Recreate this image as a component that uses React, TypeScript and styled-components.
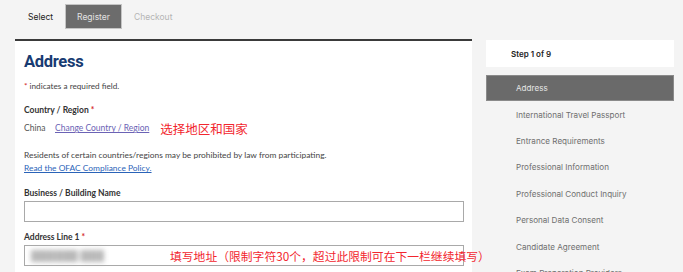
import { createGlobalStyle, styled } from "styled-components";

const GlobalStyle = createGlobalStyle`
  html, body {
    margin: 0;
    padding: 0;
    background: #f4f4f4;
    height: 272px;
    overflow: hidden;
  }
`;

const Page = styled.div`
  width: 683px;
  height: 272px;
  overflow: hidden;
  background: #f4f4f4;
  font-family: Lato, "Noto Sans", sans-serif;
`;

const Tabs = styled.div`
  display: flex;
  align-items: stretch;
  height: 25px;
  padding: 4px 0 0 16px;
  font-family: Inter, Roboto, sans-serif;
  font-size: 8.5px;
`;

const Tab = styled.div<{ $state: "done" | "active" | "todo" }>`
  display: flex;
  align-items: center;
  padding: 0 11px;
  color: ${(p) =>
    p.$state === "active" ? "#e2e2e2" : p.$state === "done" ? "#222" : "#b5b5b5"};
  background: ${(p) => (p.$state === "active" ? "#6c6c6c" : "transparent")};
  border: 1px solid ${(p) => (p.$state === "active" ? "#c4c4c4" : "transparent")};
  box-sizing: border-box;
`;

const Body = styled.div`
  display: flex;
  gap: 14px;
  margin-top: 10px;
  padding-left: 15px;
`;

const Panel = styled.div`
  width: 457px;
  background: #fff;
  border-top: 2px solid #3a3a3a;
  padding: 11px 9px 0 9px;
  box-sizing: border-box;
  height: 240px;
`;

const Heading = styled.h1`
  margin: 0 0 9px 0;
  font-family: "Liberation Sans Narrow", Roboto, sans-serif;
  font-weight: 700;
  font-size: 16.5px;
  letter-spacing: -0.3px;
  color: #173b72;
  line-height: 20px;
`;

const Small = styled.div`
  font-size: 8.2px;
  color: #444;
  line-height: 10px;
`;

const Star = styled.span`
  color: #d42a2a;
`;

const Label = styled.div<{ $gap: number }>`
  margin-top: ${(p) => p.$gap}px;
  font-size: 8.5px;
  font-weight: 700;
  color: #333;
  line-height: 11px;
`;

const Row = styled.div`
  display: flex;
  align-items: center;
  margin-top: 5px;
  height: 14px;
`;

const Plain = styled.span`
  font-size: 8.5px;
  color: #555;
  width: 31px;
`;

const Link = styled.a<{ $visited?: boolean }>`
  font-size: inherit;
  color: ${(p) => (p.$visited ? "#6b63b5" : "#2a63b8")};
  text-decoration: underline;
`;

const RowLink = styled(Link)`
  font-size: 8.5px;
`;

const Note = styled.span`
  font-family: "Noto Sans CJK SC", sans-serif;
  font-size: 12.5px;
  color: #f2262e;
  margin-left: 11px;
`;

const Para = styled.div<{ $gap?: number }>`
  margin-top: ${(p) => p.$gap ?? 0}px;
  font-size: 8.4px;
  color: #444;
  line-height: 13px;
  height: 13px;
`;

const Input = styled.div`
  height: 21px;
  width: 440px;
  border: 1px solid #a9a9a9;
  box-sizing: border-box;
  margin-top: 2px;
  display: flex;
  align-items: center;
`;

const Blur = styled.span`
  display: inline-block;
  flex: none;
  font-size: 11px;
  color: #b8b8b8;
  filter: blur(2.5px);
  margin-left: 6px;
  width: 139px;
  white-space: nowrap;
  overflow: hidden;
`;

const InputNote = styled.span`
  font-family: "Noto Sans CJK SC", sans-serif;
  font-size: 11.8px;
  color: #f2262e;
  white-space: nowrap;
`;

const Sidebar = styled.div`
  width: 188px;
`;

const StepBox = styled.div`
  height: 27px;
  background: #fff;
  margin-top: 1px;
  display: flex;
  align-items: center;
  padding-left: 25px;
  font-family: Inter, Roboto, sans-serif;
  font-size: 8px;
  font-weight: 600;
  color: #222;
`;

const StepList = styled.div`
  margin-top: 8px;
  display: flex;
  flex-direction: column;
`;

const Step = styled.div<{ $active?: boolean }>`
  height: 26.4px;
  flex: none;
  display: flex;
  align-items: center;
  padding-left: 29px;
  box-sizing: border-box;
  font-family: Inter, Roboto, sans-serif;
  font-size: 8.1px;
  color: ${(p) => (p.$active ? "#e6e6e6" : "#6f6f6f")};
  background: ${(p) => (p.$active ? "#6a6a6a" : "transparent")};
  border: 1px solid ${(p) => (p.$active ? "#8a8a8a" : "transparent")};
`;

const steps = [
  "Address",
  "International Travel Passport",
  "Entrance Requirements",
  "Professional Information",
  "Professional Conduct Inquiry",
  "Personal Data Consent",
  "Candidate Agreement",
  "Exam Preparation Providers",
];

export default function App() {
  return (
    <Page>
      <GlobalStyle />
      <Tabs>
        <Tab $state="done">Select</Tab>
        <Tab $state="active">Register</Tab>
        <Tab $state="todo">Checkout</Tab>
      </Tabs>
      <Body>
        <Panel>
          <Heading>Address</Heading>
          <Small>
            <Star>*</Star> indicates a required field.
          </Small>
          <Label $gap={14}>
            Country / Region <Star>*</Star>
          </Label>
          <Row>
            <Plain>China</Plain>
            <RowLink $visited>Change Country / Region</RowLink>
            <Note>选择地区和国家</Note>
          </Row>
          <Para $gap={14}>
            Residents of certain countries/regions may be prohibited by law from participating.
          </Para>
          <Para>
            <Link>Read the OFAC Compliance Policy.</Link>
          </Para>
          <Label $gap={13}>Business / Building Name</Label>
          <Input />
          <Label $gap={10}>
            Address Line 1 <Star>*</Star>
          </Label>
          <Input>
            <Blur>██████ ███</Blur>
            <InputNote>填写地址（限制字符30个，超过此限制可在下一栏继续填写）</InputNote>
          </Input>
        </Panel>
        <Sidebar>
          <StepBox>Step 1 of 9</StepBox>
          <StepList>
            {steps.map((s, i) => (
              <Step key={s} $active={i === 0}>
                {s}
              </Step>
            ))}
          </StepList>
        </Sidebar>
      </Body>
    </Page>
  );
}
